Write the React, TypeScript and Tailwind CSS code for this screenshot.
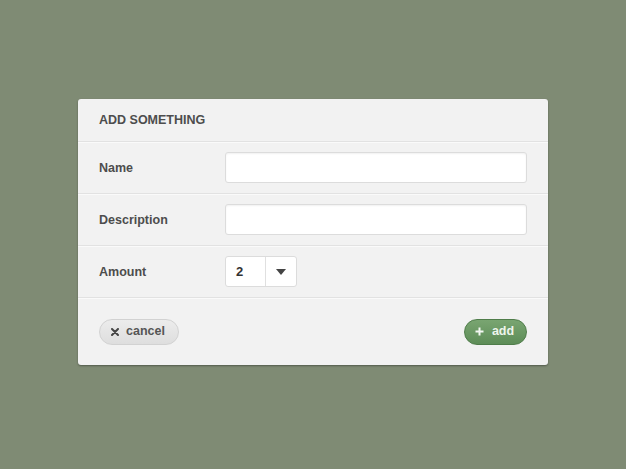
import React from "react";

export default function App() {
  const font = { fontFamily: '"Liberation Sans", Arial, sans-serif' };
  return (
    <div className="w-[626px] h-[469px] bg-[#7f8b74] pt-[99px]" style={font}>
      <div className="mx-auto w-[470px] h-[266px] bg-[#f2f2f2] rounded-[3px] shadow-[0_1px_2px_rgba(0,0,0,0.35)] flex flex-col">
        <div className="h-[43px] flex items-center px-[21px] pt-[1px] border-b border-[#e2e2e2] shadow-[0_1px_0_#fafafa]">
          <span className="text-[12.5px] font-bold text-[#4d4d4d]">ADD SOMETHING</span>
        </div>
        <div className="h-[52px] flex items-center px-[21px] border-b border-[#e2e2e2] shadow-[0_1px_0_#fafafa]">
          <span className="w-[126px] pt-[2px] text-[12.5px] font-bold text-[#4d4d4d]">Name</span>
          <div className="w-[302px] h-[31px] bg-white border border-[#dcdcdc] rounded-[3px] shadow-[inset_0_1px_2px_rgba(0,0,0,0.06)]" />
        </div>
        <div className="h-[52px] flex items-center px-[21px] border-b border-[#e2e2e2] shadow-[0_1px_0_#fafafa]">
          <span className="w-[126px] pt-[2px] text-[12.5px] font-bold text-[#4d4d4d]">Description</span>
          <div className="w-[302px] h-[31px] bg-white border border-[#dcdcdc] rounded-[3px] shadow-[inset_0_1px_2px_rgba(0,0,0,0.06)]" />
        </div>
        <div className="h-[52px] flex items-center px-[21px] border-b border-[#e2e2e2] shadow-[0_1px_0_#fafafa]">
          <span className="w-[126px] pt-[2px] text-[12.5px] font-bold text-[#4d4d4d]">Amount</span>
          <div className="w-[72px] h-[31px] bg-white border border-[#dcdcdc] rounded-[3px] flex">
            <div className="w-[40px] flex items-center pl-[10px] text-[13px] font-bold text-[#333] border-r border-[#e0e0e0]">2</div>
            <div className="flex-1 flex items-center justify-center">
              <svg width="10" height="6" viewBox="0 0 10 6"><path d="M0 0 L10 0 L5 6 Z" fill="#444" /></svg>
            </div>
          </div>
        </div>
        <div className="flex-1 flex items-center justify-between px-[21px]">
          <button className="h-[26px] w-[80px] rounded-full border border-[#d2d2d2] bg-gradient-to-b from-[#ececec] to-[#dedede] flex items-center justify-center gap-[7px] pr-[2px] text-[12.5px] font-bold text-[#555]">
            <svg width="8" height="8" viewBox="0 0 8 8"><path d="M1 1 L7 7 M7 1 L1 7" stroke="#444" strokeWidth="2" strokeLinecap="round" /></svg>
            <span>cancel</span>
          </button>
          <button className="h-[26px] w-[63px] rounded-full border border-[#4f7d4a] bg-gradient-to-b from-[#79a571] to-[#5e8d58] flex items-center justify-center gap-[8px] pr-[2px] text-[12.5px] font-bold text-[#eef5ec]">
            <svg width="9" height="9" viewBox="0 0 9 9"><path d="M4.5 0.5 V8.5 M0.5 4.5 H8.5" stroke="#f3f7f2" strokeWidth="2" /></svg>
            <span>add</span>
          </button>
        </div>
      </div>
    </div>
  );
}
